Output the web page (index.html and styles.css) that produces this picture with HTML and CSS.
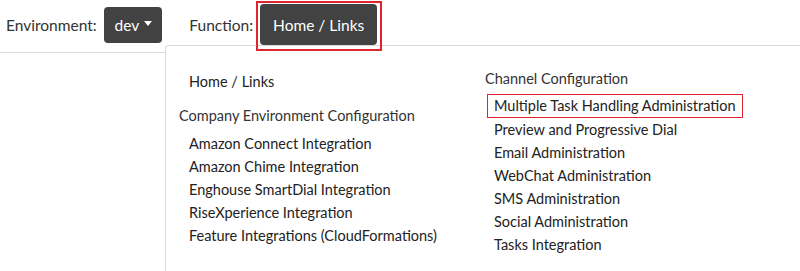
FILE: index.html
```html
<!DOCTYPE html>
<html lang="en">
<head>
  <meta charset="UTF-8">
  <title>Admin - Home / Links</title>
  <meta name="viewport" content="width=device-width, initial-scale=1.0">
  <link rel="stylesheet" href="styles.css">
</head>
<body>
  <div class="topbar">
    <span class="bar-label">Environment:</span>
    <button class="env-btn">dev <span class="caret"></span></button>
    <span class="bar-label function-label">Function:</span>
    <div class="highlight function-box">
      <button class="function-btn">Home / Links</button>
    </div>
  </div>
  <div class="page-rule"></div>

  <!-- Function dropdown -->
  <div class="function-menu">
    <div class="menu-col menu-col-left">
      <a class="menu-item home-item" href="#">Home / Links</a>
      <div class="menu-header company-header">Company Environment Configuration</div>
      <div class="menu-group">
        <a class="menu-item" href="#">Amazon Connect Integration</a>
        <a class="menu-item" href="#">Amazon Chime Integration</a>
        <a class="menu-item" href="#">Enghouse SmartDial Integration</a>
        <a class="menu-item" href="#">RiseXperience Integration</a>
        <a class="menu-item" href="#">Feature Integrations (CloudFormations)</a>
      </div>
    </div>
    <div class="menu-col menu-col-right">
      <div class="menu-header">Channel Configuration</div>
      <div class="menu-group channel-group">
        <a class="menu-item selected-item" href="#">Multiple Task Handling Administration</a>
        <a class="menu-item" href="#">Preview and Progressive Dial</a>
        <a class="menu-item" href="#">Email Administration</a>
        <a class="menu-item" href="#">WebChat Administration</a>
        <a class="menu-item" href="#">SMS Administration</a>
        <a class="menu-item" href="#">Social Administration</a>
        <a class="menu-item" href="#">Tasks Integration</a>
      </div>
    </div>
  </div>
</body>
</html>
```

FILE: styles.css
```css
body {
  margin: 0;
  padding: 0;
  background: #fff;
  font-family: 'Lato', 'Open Sans', sans-serif;
  color: #2b2b2b;
  overflow: hidden;
}
.topbar {
  display: flex;
  align-items: center;
  height: 52px;
  padding-left: 6px;
}
.bar-label {
  font-size: 15.5px;
  color: #333;
  margin-right: 7px;
  margin-bottom: 2px;
}
.function-label {
  margin-left: 27px;
  margin-right: 3px;
}
.env-btn, .function-btn {
  background: #424242;
  color: #fff;
  border: none;
  border-radius: 4px;
  font-family: inherit;
  font-size: 15.5px;
  cursor: pointer;
}
.env-btn {
  height: 36px;
  padding: 0 10px 0 11px;
  margin-bottom: 2px;
  display: flex;
  align-items: center;
  gap: 5px;
}
.caret {
  width: 0;
  height: 0;
  border-top: 5px solid #fff;
  border-left: 4.5px solid transparent;
  border-right: 4.5px solid transparent;
  margin-bottom: 3px;
}
.function-box {
  position: relative;
  z-index: 2;
  border: 2px solid #e0242d;
  padding: 1px 3px 4px 2px;
}
.function-btn {
  height: 41px;
  padding: 0 13px;
  display: block;
}
.page-rule {
  border-top: 1px solid #dcdcdc;
}
/* Dropdown */
.function-menu {
  position: absolute;
  z-index: 1;
  top: 45px;
  left: 165px;
  right: 0;
  bottom: 0;
  background: #fff;
  border-top: 1px solid #dadada;
  border-left: 1px solid #dadada;
  border-top-left-radius: 4px;
  padding: 21px 0 0 13px;
  display: flex;
  font-size: 14.5px;
  line-height: 23px;
}
.menu-col-left {
  width: 306px;
  padding-top: 3px;
}
.menu-header {
  color: #333;
}
.menu-item {
  display: block;
  color: #222;
  text-decoration: none;
  padding-left: 10px;
}
.company-header {
  margin-top: 11px;
}
.menu-group {
  margin-top: 5px;
}
.channel-group {
  margin-top: 4px;
}
.menu-col-right .menu-item {
  padding-left: 9px;
}
.menu-col-right .selected-item {
  display: inline-block;
  border: 1.5px solid #e0242d;
  padding: 0 6px;
  margin-left: 2px;
  line-height: 22px;
}
```
